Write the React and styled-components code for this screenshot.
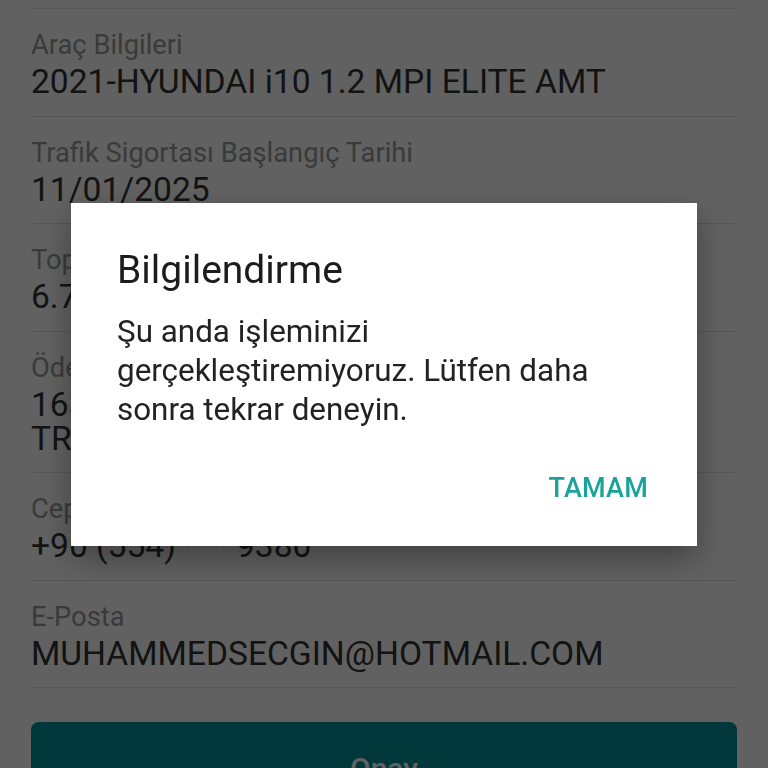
import React from "react";
import styled, { createGlobalStyle } from "styled-components";

const Global = createGlobalStyle`
  html, body { margin: 0; padding: 0; background: #ffffff; }
  body { font-family: Roboto, "Noto Sans", "Liberation Sans", sans-serif; overflow: hidden; }
  * { box-sizing: border-box; }
`;

const Page = styled.div`
  width: 768px;
  height: 768px;
  padding: 8px 31px 0 31px;
  background: #ffffff;
  overflow: hidden;
`;

const List = styled.div`
  display: flex;
  flex-direction: column;
  border-top: 1px solid #e0e0e0;
`;

const Row = styled.div`
  display: flex;
  flex-direction: column;
  padding: 20px 0 16.5px 0;
  border-bottom: 1px solid #e0e0e0;
`;

const Label = styled.div`
  font-size: 27.3px;
  line-height: 32px;
  color: #9a9a9a;
  margin-bottom: 4px;
  white-space: nowrap;
`;

const Value = styled.div`
  font-size: 33.6px;
  line-height: 34px;
  color: #333333;
  white-space: pre-line;
`;

const PrimaryButton = styled.button`
  display: flex;
  align-items: center;
  justify-content: center;
  width: 100%;
  height: 92px;
  margin-top: 34px;
  border: none;
  border-radius: 8px;
  background: #009199;
  color: #ffffff;
  font-family: Roboto, "Noto Sans", sans-serif;
  font-size: 30px;
  font-weight: 500;
`;

const Overlay = styled.div`
  position: fixed;
  inset: 0;
  background: rgba(0, 0, 0, 0.62);
  display: flex;
  align-items: flex-start;
  justify-content: center;
  padding-top: 203px;
`;

const Dialog = styled.div`
  width: 626px;
  background: #ffffff;
  padding: 44px 49px 42px 46px;
  display: flex;
  flex-direction: column;
  box-shadow: 0 12px 30px rgba(0, 0, 0, 0.35);
`;

const Title = styled.h2`
  margin: 0;
  font-size: 39px;
  line-height: 46px;
  font-weight: 400;
  color: #1c1c1c;
`;

const Message = styled.p`
  margin: 19px 0 0 0;
  font-size: 31.4px;
  line-height: 39px;
  color: #222222;
`;

const Actions = styled.div`
  display: flex;
  justify-content: flex-end;
  margin-top: 43px;
`;

const TextButton = styled.button`
  border: none;
  background: none;
  padding: 0;
  font-family: Roboto, "Noto Sans", sans-serif;
  font-size: 27px;
  line-height: 32px;
  font-weight: 500;
  color: #1aa39b;
  letter-spacing: 0.2px;
`;

const rows = [
  { label: "Araç Bilgileri", value: "2021-HYUNDAI i10 1.2 MPI ELITE AMT" },
  { label: "Trafik Sigortası Başlangıç Tarihi", value: "11/01/2025" },
  { label: "Toplam Prim", value: "6.742,18 TL" },
  { label: "Ödeme Bilgileri", value: "1635 **** **** 4821\nTR KREDİ KARTI" },
  { label: "Cep Telefonu", value: "+90 (554) *** 9380" },
  { label: "E-Posta", value: "MUHAMMEDSECGIN@HOTMAIL.COM" },
];

export default function App() {
  return (
    <>
      <Global />
      <Page>
        <List>
          {rows.map((r) => (
            <Row key={r.label}>
              <Label>{r.label}</Label>
              <Value>{r.value}</Value>
            </Row>
          ))}
        </List>
        <PrimaryButton>Onay</PrimaryButton>
      </Page>
      <Overlay>
        <Dialog>
          <Title>Bilgilendirme</Title>
          <Message>
            Şu anda işleminizi gerçekleştiremiyoruz. Lütfen daha sonra tekrar deneyin.
          </Message>
          <Actions>
            <TextButton>TAMAM</TextButton>
          </Actions>
        </Dialog>
      </Overlay>
    </>
  );
}
